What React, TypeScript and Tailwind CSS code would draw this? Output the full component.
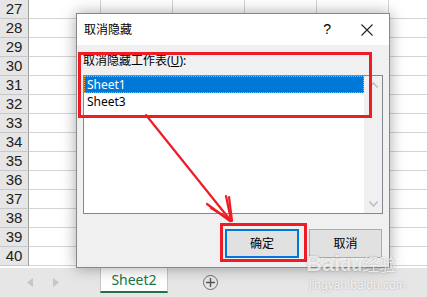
import React from 'react';

const rows = [27, 28, 29, 30, 31, 32, 33, 34, 35, 36, 37, 38, 39, 40];
const cols = [0, 1, 2, 3, 4, 5];

const cjk = { fontFamily: '"Noto Sans", "Noto Sans CJK SC", sans-serif' };

const Grid = () => (
  <div className="h-[268px] overflow-hidden bg-white">
    {rows.map((r) => (
      <div key={r} className="flex h-[19px]">
        <div className="w-[29px] shrink-0 bg-[#e6e6e6] border-r border-b border-r-[#9e9e9e] border-b-[#c8c8c8] flex items-center justify-center text-[15px] text-[#222] font-['Liberation_Sans',sans-serif]">
          {r}
        </div>
        {cols.map((c) => (
          <div key={c} className="w-[72px] shrink-0 border-r border-b border-[#d4d4d4]" />
        ))}
      </div>
    ))}
  </div>
);

const TabBar = () => (
  <div className="h-[29px] bg-[#e6e6e6] flex items-start">
    <div className="w-[100px] h-full flex items-center gap-[20px] pl-[27px]">
      <svg width="6" height="9" viewBox="0 0 6 9"><path d="M6 0 L0 4.5 L6 9 Z" fill="#c6c6c6" /></svg>
      <svg width="6" height="9" viewBox="0 0 6 9"><path d="M0 0 L6 4.5 L0 9 Z" fill="#c6c6c6" /></svg>
    </div>
    <div className="w-[68px] h-[25px] bg-white border-x border-[#c6c6c6] border-b-2 border-b-[#217346] flex items-center justify-center text-[14px] text-[#217346]" style={cjk}>
      Sheet2
    </div>
    <div className="h-full flex items-center pl-[35px]">
      <div className="w-[15px] h-[15px] rounded-full border border-[#6e6e6e] flex items-center justify-center">
        <svg width="9" height="9" viewBox="0 0 9 9"><path d="M4.5 0 V9 M0 4.5 H9" stroke="#555" strokeWidth="1.4" /></svg>
      </div>
    </div>
  </div>
);

const Dialog = () => (
  <div className="absolute left-[76px] top-[13px] w-[314px] h-[255px] border border-[#888] bg-[#f0f0f0] flex flex-col shadow-[0_0_14px_rgba(0,0,0,0.35)]" style={cjk}>
    <div className="h-[31px] bg-white flex items-center pl-[7px] pr-[16px] text-[12px] text-black">
      <span className="flex-1">取消隐藏</span>
      <span className="text-[14px] mr-[30px] font-['Liberation_Sans',sans-serif]">?</span>
      <svg width="12" height="12" viewBox="0 0 12 12"><path d="M0.5 0.5 L11.5 11.5 M11.5 0.5 L0.5 11.5" stroke="#222" strokeWidth="1.1" /></svg>
    </div>
    <div className="flex-1 flex flex-col px-[6px] pt-[9px]">
      <div className="text-[12px] leading-[14px] text-black mb-[7px]">
        取消隐藏工作表(<span className="underline">U</span>):
      </div>
      <div className="h-[139px] bg-white border border-[#828790] flex">
        <div className="flex-1 flex flex-col">
          <div className="h-[17px] bg-[#0078d7] text-white text-[12px] leading-[15px] px-[2px] border border-dotted border-[#f2a23a]">Sheet1</div>
          <div className="h-[17px] text-black text-[12px] leading-[17px] px-[3px]">Sheet3</div>
        </div>
        <div className="w-[18px] bg-[#f0f0f0] flex flex-col items-center justify-between py-[6px]">
          <svg width="9" height="6" viewBox="0 0 9 6"><path d="M0.5 5.5 L4.5 1 L8.5 5.5" fill="none" stroke="#c2c2c2" strokeWidth="1.6" /></svg>
          <svg width="9" height="6" viewBox="0 0 9 6"><path d="M0.5 0.5 L4.5 5 L8.5 0.5" fill="none" stroke="#c2c2c2" strokeWidth="1.6" /></svg>
        </div>
      </div>
      <div className="flex justify-end gap-[10px] mt-[15px] pr-[1px]">
        <button className="w-[74px] h-[29px] bg-[#e1e1e1] border-2 border-[#0078d7] text-[12px] font-normal text-black">确定</button>
        <button className="w-[73px] h-[29px] bg-[#e1e1e1] border border-[#adadad] text-[12px] font-normal text-black">取消</button>
      </div>
    </div>
  </div>
);

const Annotations = () => (
  <>
    <div className="absolute left-[78px] top-[52px] w-[294px] h-[66px] border-[3px] border-[#ee1c25]" />
    <div className="absolute left-[220px] top-[223px] w-[87px] h-[39px] border-[3px] border-[#ee1c25]" />
    <svg className="absolute left-0 top-0 pointer-events-none" width="427" height="297" viewBox="0 0 427 297">
      <g stroke="#ee1c25" strokeWidth="2.2" fill="none" strokeLinecap="round">
        <path d="M146 115 L231 221" />
        <path d="M207 204 L230 221" />
        <path d="M211 208 L229 219" />
        <path d="M226 196 L231 220" />
        <path d="M229 197 L232 221" />
      </g>
    </svg>
    <div className="absolute left-[306px] top-[253px] text-[22px] font-bold leading-none text-white/75 [text-shadow:0_0_2px_rgba(0,0,0,0.3)] font-['Liberation_Sans',sans-serif]">
      Bai<span className="text-[18px]">du</span><span className="text-[17px] font-normal" style={cjk}>经验</span>
    </div>
    <div className="absolute left-[309px] top-[279px] text-[12px] leading-none text-white/80 [text-shadow:0_0_2px_rgba(0,0,0,0.3)] font-['Liberation_Sans',sans-serif]">
      jingyan.baidu.com
    </div>
  </>
);

export default function App() {
  return (
    <div className="relative w-[427px] h-[297px] overflow-hidden bg-white">
      <Grid />
      <TabBar />
      <Dialog />
      <Annotations />
    </div>
  );
}
